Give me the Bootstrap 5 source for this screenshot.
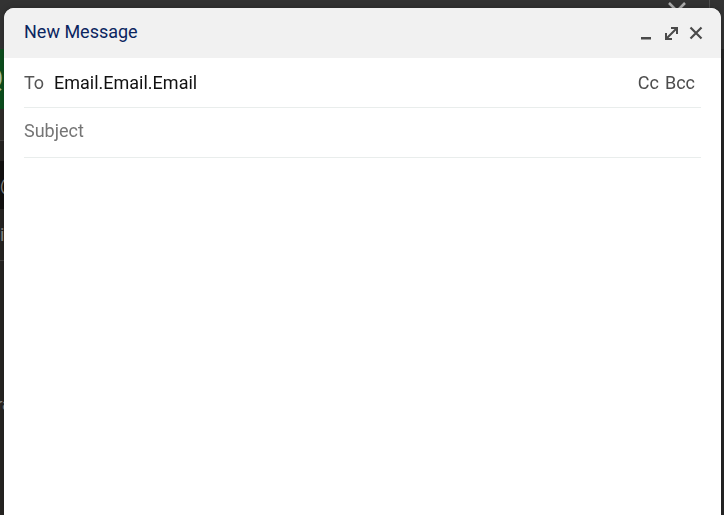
<!DOCTYPE html>
<html lang="en">
<head>
<meta charset="utf-8">
<meta name="viewport" content="width=device-width, initial-scale=1">
<title>New Message</title>
<link rel="stylesheet" href="https://cdn.jsdelivr.net/npm/bootstrap@5.3.0/dist/css/bootstrap.min.css">
<style>
  body { font-family: Roboto, "Liberation Sans", sans-serif; font-size: 18px; line-height: 24px; background: #262626; color: #8c8a88; }
  /* dimmed page behind the compose window */
  .page-top { height: 49px; background: #333; }
  .page-side { min-height: 100vh; background: #272522; }
  .page-brand { height: 60px; background: #0c501e; color: #a5c5ac; font-size: 28px; }
  .page-brand span { margin-left: -16px; }
  .page-gap { height: 32px; background: #2f2d2a; }
  .page-space { height: 20px; }
  .page-active { height: 48px; background: #131110; }
  .page-row { height: 52px; }
  .page-line { border-bottom: 1px solid #42403e; }
  .page-rest { padding-top: 132px; font-size: 16px; }
  .page-rest span { margin-left: -3px; }
  .page-close { top: 2px; right: 38px; }
  .page-edge { width: 15px; height: 8px; border-left: 1px solid #505050; }
  /* compose window */
  .compose { inset: 8px 3px 0 4px; border-radius: 10px 10px 0 0; box-shadow: 0 0 6px rgba(0,0,0,.25); }
  .compose-head { height: 50px; background: #f1f1f1; padding: 0 17px 2px 20px; }
  .compose-title { font-size: 18px; line-height: 24px; color: #0b2560; }
  .tool { width: 16px; height: 16px; color: #4a4a4a; }
  .tool svg { display: block; }
  .compose-body { padding: 0 20px; }
  .field-row { height: 50px; border-bottom: 1px solid #e9edec; }
  .field-row input, .message { color: #111; outline: 0; background: none; }
  .field-row input::placeholder { color: #757575; opacity: 1; }
  .field-label { width: 30px; color: #555; }
  .copy-links { gap: 6px; padding-right: 6px; }
  .copy-links a { color: #4c4c4c; }
  .message { resize: none; }
</style>
</head>
<body class="overflow-hidden">
<div aria-hidden="true">
  <div class="page-top"></div>
  <div class="page-side w-50">
    <div class="page-brand d-flex align-items-center"><span>Q</span></div>
    <div class="page-gap page-line"></div>
    <div class="page-space"></div>
    <div class="page-active d-flex align-items-center"><span>@</span></div>
    <div class="page-row page-line d-flex align-items-center"><span>i</span></div>
    <div class="page-rest"><span>ra</span></div>
  </div>
</div>
<div class="page-edge position-absolute top-0 end-0" aria-hidden="true"></div>
<svg class="page-close position-absolute" width="18" height="18" viewBox="0 0 18 18" fill="none" stroke="#b0b0b0" stroke-width="2.5" aria-hidden="true"><path d="M1 1l16 16M17 1L1 17"/></svg>

<section class="compose position-fixed bg-white overflow-hidden d-flex flex-column" role="dialog" aria-labelledby="title">
  <header class="compose-head d-flex align-items-center justify-content-between flex-shrink-0">
    <h1 class="compose-title fw-normal m-0" id="title">New Message</h1>
    <div class="d-flex gap-2">
      <button type="button" class="tool btn p-0 border-0" aria-label="Minimize"><svg width="16" height="16" viewBox="0 0 16 16" fill="currentColor"><path d="M1 13h10v2.500H1z"/></svg></button>
      <button type="button" class="tool btn p-0 border-0" aria-label="Full screen"><svg width="16" height="16" viewBox="0 0 16 16" fill="none" stroke="currentColor" stroke-width="2"><path d="M7 4h6v6M2 9v6h6M2.500 14.500L12.500 4.500"/></svg></button>
      <button type="button" class="tool btn p-0 border-0" aria-label="Close"><svg width="16" height="16" viewBox="0 0 16 16" fill="none" stroke="currentColor" stroke-width="2.200"><path d="M2.500 3.500l11 11M13.500 3.500l-11 11"/></svg></button>
    </div>
  </header>
  <form class="compose-body d-flex flex-column flex-grow-1">
    <div class="field-row d-flex align-items-center">
      <label class="field-label" for="to">To</label>
      <input class="border-0 p-0 flex-grow-1" id="to" type="text" value="Email.Email.Email">
      <div class="copy-links d-flex">
        <a class="text-decoration-none" href="#cc">Cc</a>
        <a class="text-decoration-none" href="#bcc">Bcc</a>
      </div>
    </div>
    <div class="field-row d-flex align-items-center pb-1">
      <input class="border-0 p-0 flex-grow-1" type="text" placeholder="Subject" aria-label="Subject">
    </div>
    <textarea class="message border-0 p-0 pt-3 flex-grow-1" aria-label="Message body"></textarea>
  </form>
</section>
<script src="https://cdn.jsdelivr.net/npm/bootstrap@5.3.0/dist/js/bootstrap.bundle.min.js"></script>
</body>
</html>
